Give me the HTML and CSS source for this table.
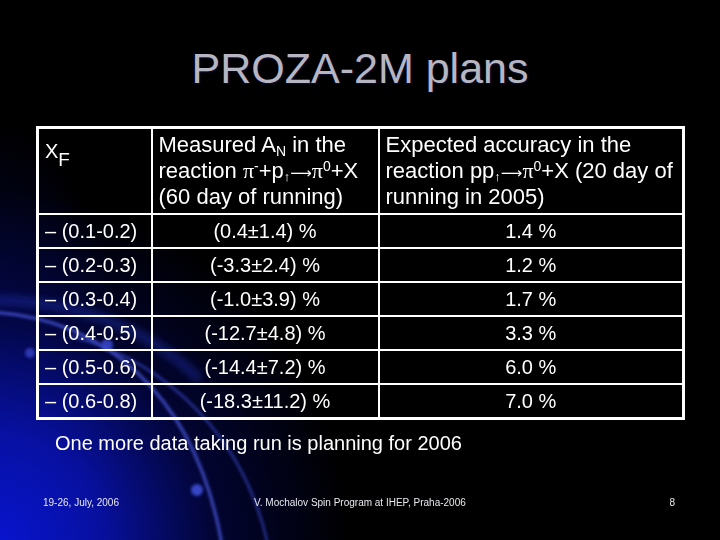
FILE: index.html
```html
<!DOCTYPE html>
<html lang="en">
<head>
<meta charset="utf-8">
<title>PROZA-2M plans</title>
<link rel="stylesheet" href="styles.css">
</head>
<body>
<div class="slide">
  <svg class="backdrop" width="720" height="540" viewBox="0 0 720 540" aria-hidden="true">
    <defs>
      <filter id="soft" x="-20%" y="-20%" width="140%" height="140%">
        <feGaussianBlur stdDeviation="1.4"/>
      </filter>
      <filter id="softer" x="-20%" y="-20%" width="140%" height="140%">
        <feGaussianBlur stdDeviation="4"/>
      </filter>
    </defs>
    <g filter="url(#softer)" fill="none">
      <path d="M -10 300 C 80 300, 150 330, 200 380" stroke="#1c2ca8" stroke-width="8" opacity="0.6"/>
    </g>
    <g filter="url(#soft)" fill="none">
      <path d="M -10 312 C 100 318, 195 390, 222 545" stroke="#4454d8" stroke-width="3" opacity="0.85"/>
      <path d="M 70 336 C 170 362, 245 440, 268 545" stroke="#3444c4" stroke-width="2.5" opacity="0.7"/>
    </g>
    <g filter="url(#soft)" fill="#3848cc">
      <circle cx="30" cy="353" r="5" opacity="0.75"/>
      <circle cx="107" cy="345" r="6" opacity="0.85"/>
      <circle cx="197" cy="490" r="6" opacity="0.95"/>
    </g>
  </svg>

  <h1 class="title">PROZA-2M plans</h1>

  <table class="data">
    <colgroup>
      <col class="c-xf">
      <col class="c-meas">
      <col class="c-exp">
    </colgroup>
    <thead>
      <tr class="head-row">
        <th class="xf">X<span class="low">F</span></th>
        <th>Measured A<span class="sub-n">N</span> in the<br>reaction <span class="sym">π</span><span class="sup">-</span>+p<span class="sub-a">↑</span><span class="arrow">⟶</span><span class="sym">π</span><span class="sup">0</span>+X<br>(60 day of running)</th>
        <th>Expected accuracy in the<br>reaction pp<span class="sub-a">↑</span><span class="arrow">⟶</span><span class="sym">π</span><span class="sup">0</span>+X (20 day of<br>running in 2005)</th>
      </tr>
    </thead>
    <tbody>
      <tr><td>– (0.1-0.2)</td><td class="mid">(0.4±1.4) %</td><td class="mid">1.4 %</td></tr>
      <tr><td>– (0.2-0.3)</td><td class="mid">(-3.3±2.4) %</td><td class="mid">1.2 %</td></tr>
      <tr><td>– (0.3-0.4)</td><td class="mid">(-1.0±3.9) %</td><td class="mid">1.7 %</td></tr>
      <tr><td>– (0.4-0.5)</td><td class="mid">(-12.7±4.8) %</td><td class="mid">3.3 %</td></tr>
      <tr><td>– (0.5-0.6)</td><td class="mid">(-14.4±7.2) %</td><td class="mid">6.0 %</td></tr>
      <tr><td>– (0.6-0.8)</td><td class="mid">(-18.3±11.2) %</td><td class="mid">7.0 %</td></tr>
    </tbody>
  </table>

  <p class="note">One more data taking run is planning for 2006</p>

  <footer class="foot">
    <span class="foot-date">19-26, July, 2006</span>
    <span class="foot-title">V. Mochalov Spin Program at IHEP, Praha-2006</span>
    <span class="foot-num">8</span>
  </footer>
</div>
</body>
</html>
```

FILE: styles.css
```css
html, body {
  margin: 0;
  padding: 0;
  background: #000;
}

.slide {
  position: relative;
  width: 720px;
  height: 540px;
  overflow: hidden;
  display: flex;
  flex-direction: column;
  font-family: "Liberation Sans", Arial, sans-serif;
  color: #fff;
  background:
    radial-gradient(ellipse 350px 350px at 0% 100%, rgba(8, 20, 205, 1) 0%, rgba(8, 18, 175, 0.88) 30%, rgba(4, 8, 95, 0.5) 62%, rgba(0, 0, 0, 0) 100%),
    radial-gradient(ellipse 130px 340px at 0% 85%, rgba(6, 14, 130, 0.6) 0%, rgba(0, 0, 0, 0) 100%),
    #000;
}

.backdrop {
  position: absolute;
  left: 0;
  top: 0;
  z-index: 0;
}

.title,
.data,
.note,
.foot {
  position: relative;
  z-index: 1;
}

.title {
  margin: 0;
  padding-top: 47px;
  font-weight: normal;
  font-size: 43px;
  line-height: 43px;
  text-align: center;
  color: #b6b6c2;
  text-shadow: 1px 1px 2px rgba(20, 20, 70, 0.8);
}

.data {
  margin: 36px 0 0 36px;
  width: 646px;
  table-layout: fixed;
  border-collapse: collapse;
  border: 3px solid #fff;
  font-size: 20px;
  line-height: 24px;
  color: #fff;
}

.c-xf { width: 114px; }
.c-meas { width: 227px; }
.c-exp { width: 305px; }

.data th,
.data td {
  border: 2px solid #fff;
  padding: 0 6px;
  font-weight: normal;
  text-align: left;
  white-space: nowrap;
}

.data th {
  vertical-align: top;
  padding-top: 3px;
  padding-bottom: 3px;
  font-size: 22px;
  line-height: 26px;
}

.data th.xf {
  font-size: 20px;
  padding-top: 9px;
}

.head-row {
  height: 80px;
}

.data tbody tr {
  height: 34px;
}

.data td {
  vertical-align: middle;
}

.data td.mid {
  text-align: center;
}

.low {
  font-size: 19px;
  vertical-align: -8px;
  line-height: 0;
}

.sub-n {
  font-size: 14px;
  vertical-align: -4px;
  line-height: 0;
}

.sub-a {
  font-size: 13px;
  vertical-align: -3px;
  line-height: 0;
}

.sym {
  font-family: "Liberation Serif", "DejaVu Serif", serif;
}

.arrow {
  font-family: "DejaVu Sans", sans-serif;
  font-size: 15px;
  line-height: 0;
}

.sup {
  font-size: 14px;
  vertical-align: 7px;
  line-height: 0;
}

.note {
  margin: 11px 0 0 55px;
  font-size: 20px;
  line-height: 24px;
  color: #fff;
}

.foot {
  margin-top: auto;
  padding: 0 45px 31px 43px;
  display: flex;
  font-size: 10px;
  line-height: 12px;
  color: #e8e8ee;
}

.foot-date {
  width: 211px;
}

.foot-title {
  flex: 1;
}
```
